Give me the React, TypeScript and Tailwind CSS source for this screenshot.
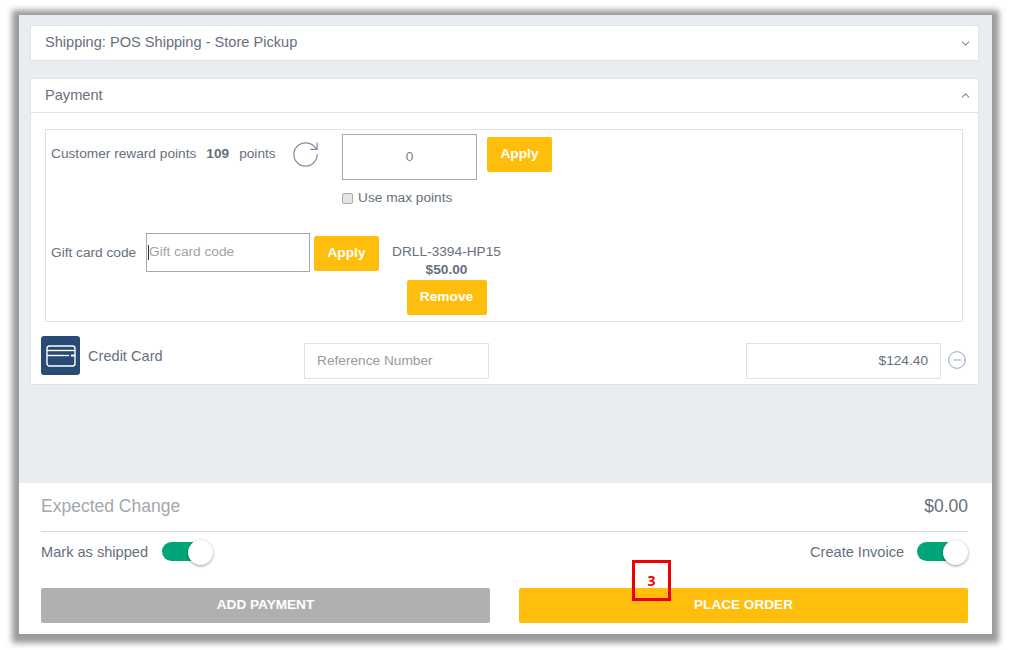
import React from "react";
import { ChevronDown, ChevronUp, RotateCw, CircleMinus } from "lucide-react";

const CardIcon = () => {
  return (
    <div className="flex h-[39px] w-[39px] items-center justify-center rounded-[3px] bg-[#2a4a76]">
      <svg width="30" height="24" viewBox="0 0 30 24" fill="none" stroke="#ffffff" strokeWidth="1.4">
        <rect x="1" y="2" width="28" height="20" rx="2.5" />
        <path d="M1 6.5h28" />
        <path d="M1 11.5h22" />
        <path d="M25 11.5h4" strokeWidth="2" />
      </svg>
    </div>
  );
};

const Toggle = () => {
  return (
    <div className="relative -mt-[2px] h-[19px] w-[51px]">
      <div className="h-[19px] w-[40px] rounded-full bg-[#00a67a]" />
      <div className="absolute left-[26px] top-[-2px] h-[25px] w-[25px] rounded-full bg-white shadow-[0_1px_3px_rgba(0,0,0,0.4)]" />
    </div>
  );
};

const App = () => {
  return (
    <div className="h-[650px] w-[1011px] overflow-hidden bg-white pl-[19px] pt-[15px] font-['Liberation_Sans',Arial,sans-serif] text-[13.7px] text-[#66707e]">
      <div className="relative flex h-[619px] w-[973px] flex-col shadow-[0_2px_6px_7px_#9a9a9a]">
        <div className="h-[468px] bg-[#e9ecf1] pl-[11px] pr-[13px] pt-[10px]">
          <div className="flex h-[36px] items-center justify-between border border-[#dfe2e6] bg-white pl-[14px] pr-[6px]">
            <span className="text-[14.6px]">Shipping: POS Shipping - Store Pickup</span>
            <ChevronDown size={13} className="text-[#7b8ca5]" />
          </div>

          <div className="mt-[17px] h-[307px] border border-[#dfe2e6] bg-white">
            <div className="flex h-[34px] items-center justify-between border-b border-[#dfe2e6] pl-[14px] pr-[6px]">
              <span className="text-[14.6px]">Payment</span>
              <ChevronUp size={13} className="text-[#7b8ca5]" />
            </div>

            <div className="ml-[14px] mr-[15px] mt-[16px] h-[193px] border border-[#dfe2e6] pl-[5px] pt-[4px]">
              <div className="flex items-start">
                <div className="mt-[12px] flex h-[17px] w-[291px] items-center whitespace-nowrap">
                  <span>Customer reward points</span>
                  <b className="ml-[10px]">109</b>
                  <span className="ml-[10px]">points</span>
                  <RotateCw size={31} strokeWidth={0.9} className="ml-[14px] text-[#7d8a9c]" />
                </div>
                <div>
                  <div className="flex h-[46px] w-[135px] items-center justify-center border border-[#a8a8a8] text-[#7a8594]">
                    0
                  </div>
                  <div className="mt-[8px] flex items-center gap-[5px] leading-[20px]">
                    <div className="h-[11px] w-[11px] rounded-[2px] border border-[#aaa] bg-[#e4e4e4]" />
                    <span>Use max points</span>
                  </div>
                </div>
                <button className="ml-[10px] mt-[3px] h-[35px] w-[65px] rounded-[2px] bg-[#ffbe0b] font-bold text-white">
                  Apply
                </button>
              </div>

              <div className="mt-[25px] flex items-start">
                <span className="mt-[10px] w-[95px]">Gift card code</span>
                <div className="flex h-[39px] w-[164px] items-center border border-[#a8a8a8] pl-[1px] text-[#a3a3a3]">
                  <div className="h-[15px] w-px bg-[#333]" />
                  <span>Gift card code</span>
                </div>
                <button className="ml-[4px] mt-[3px] h-[35px] w-[65px] rounded-[2px] bg-[#ffbe0b] font-bold text-white">
                  Apply
                </button>
                <div className="ml-[14px] mt-[10px] flex w-[107px] flex-col items-center whitespace-nowrap">
                  <span className="leading-[17px]">DRLL-3394-HP15</span>
                  <b className="leading-[20px]">$50.00</b>
                  <button className="h-[35px] w-[80px] rounded-[2px] bg-[#ffbe0b] font-bold text-white">
                    Remove
                  </button>
                </div>
              </div>
            </div>

            <div className="flex items-start pl-[10px] pt-[14px]">
              <CardIcon />
              <span className="ml-[8px] flex h-[39px] w-[216px] items-center pt-[2px] text-[14.6px]">Credit Card</span>
              <div className="mt-[7px] flex h-[36px] w-[185px] items-center border border-[#dfe2e6] pl-[12px] text-[#9a9a9a]">
                Reference Number
              </div>
              <div className="ml-[257px] mt-[7px] flex h-[36px] w-[195px] items-center justify-end border border-[#dfe2e6] pr-[12px]">
                $124.40
              </div>
              <CircleMinus size={20} strokeWidth={1} className="ml-[6px] mt-[14px] text-[#7d93b5]" />
            </div>
          </div>
        </div>

        <div className="flex-1 bg-white pl-[22px] pr-[24px]">
          <div className="flex h-[49px] items-center justify-between border-b border-[#d8d8d8] pb-[1px] text-[17.5px]">
            <span className="text-[#a3a8ae]">Expected Change</span>
            <span>$0.00</span>
          </div>
          <div className="mt-[9px] flex h-[23px] items-center justify-between text-[14.6px]">
            <div className="flex items-center">
              <span className="mt-[1px] w-[121px]">Mark as shipped</span>
              <Toggle />
            </div>
            <div className="flex items-center">
              <span className="mt-[1px] w-[107px]">Create Invoice</span>
              <Toggle />
            </div>
          </div>
          <div className="mt-[24px] flex justify-between text-[13.6px]">
            <button className="h-[35px] w-[449px] rounded-[2px] bg-[#b0b0b0] font-bold text-white">ADD PAYMENT</button>
            <button className="h-[35px] w-[449px] rounded-[2px] bg-[#ffbe0b] font-bold text-white">PLACE ORDER</button>
          </div>
        </div>

        <div className="absolute left-[613px] top-[545px] flex h-[41px] w-[39px] items-center justify-center border-[3px] border-[#f00000] font-['Noto_Sans',sans-serif] text-sm font-bold text-[#f00000]">
          3
        </div>
      </div>
    </div>
  );
};

export default App;
